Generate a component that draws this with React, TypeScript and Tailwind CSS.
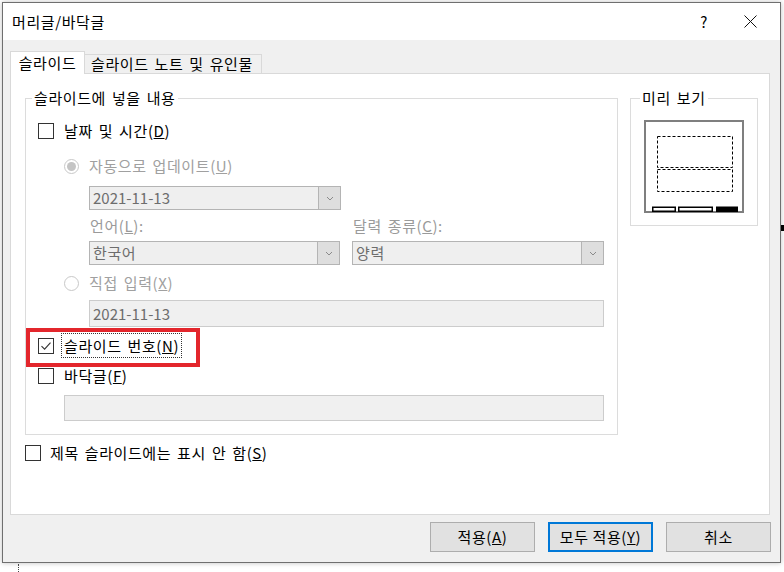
import React from "react";

function Checkbox({ checked }: { checked?: boolean }) {
  return (
    <span className="w-4 h-4 border border-[#333333] bg-white flex items-center justify-center shrink-0">
      {checked && (
        <svg width="14" height="14" viewBox="0 0 14 14">
          <path d="M2.5 7.2 L5.6 10.2 L11.5 3.6" fill="none" stroke="#333333" strokeWidth="1.1" />
        </svg>
      )}
    </span>
  );
}

function Radio({ checked }: { checked?: boolean }) {
  return (
    <span className="w-[15px] h-[15px] rounded-full border border-[#c8c8c8] bg-white flex items-center justify-center shrink-0">
      {checked && <span className="w-[9px] h-[9px] rounded-full bg-[#c4c4c4]" />}
    </span>
  );
}

function Chevron() {
  return (
    <svg width="8" height="5" viewBox="0 0 8 5">
      <path d="M1 1 L4 4 L7 1" fill="none" stroke="#8a8a8a" strokeWidth="1" />
    </svg>
  );
}

function Select({ value, className }: { value: string; className: string }) {
  return (
    <div className={"flex h-[24px] border border-[#b4b4b4] bg-[#efefef] " + className}>
      <div className="flex-1 flex items-center pl-[3px] text-[#6d6d6d]">{value}</div>
      <div className="w-[22px] border-l border-[#b4b4b4] bg-[#dedede] flex items-center justify-center">
        <Chevron />
      </div>
    </div>
  );
}

export default function App() {
  return (
    <div className="relative w-[784px] h-[572px] bg-white overflow-hidden font-['Noto_Sans_CJK_KR','Noto_Sans',sans-serif] text-[15px] leading-[20px] tracking-[0.6px] [word-spacing:2px] text-black">
      <div className="ml-[2px] mt-[2px] w-[779px] h-[561px] border border-[#6f6f6f] bg-[#f0f0f0] flex flex-col shadow-[0_0_5px_rgba(0,0,0,0.25)]">
        {/* title bar */}
        <div className="h-[37px] bg-white flex items-center pl-[9px] pr-[7px] shrink-0">
          <div className="flex-1">머리글/바닥글</div>
          <div className="w-[46px] flex justify-center text-[15px]">?</div>
          <div className="w-[46px] flex justify-center">
            <svg width="13" height="13" viewBox="0 0 13 13">
              <path d="M0.5 0.5 L12.5 12.5 M12.5 0.5 L0.5 12.5" stroke="#111111" strokeWidth="1" />
            </svg>
          </div>
        </div>

        {/* body */}
        <div className="flex-1 flex flex-col pl-[7px] pt-[11px]">
          {/* tabs */}
          <div className="flex items-end h-[22px]">
            <div className="relative z-10 w-[75px] h-[23px] mb-[-1px] bg-white border-t border-l border-r border-[#d9d9d9] flex items-center justify-center">
              슬라이드
            </div>
            <div className="w-[177px] h-[19px] border-t border-r border-[#d9d9d9] flex items-center pl-[6px]">
              슬라이드 노트 및 유인물
            </div>
          </div>

          {/* panel */}
          <div className="w-[760px] h-[442px] bg-white border border-[#d9d9d9] flex flex-col">
            <div className="flex items-start ml-[14px] mt-[14px] gap-[12px]">
              {/* group 1 */}
              <fieldset className="w-[593px] border border-[#dcdcdc] px-0 pb-[13px]">
                <legend className="ml-[6px] px-[2px] leading-[20px]">슬라이드에 넣을 내용</legend>
                <div className="flex flex-col pl-[12px] pr-[12px] mt-[11px]">
                  <div className="flex items-center h-[24px] gap-[10px]">
                    <Checkbox />
                    <span>
                      날짜 및 시간(<u>D</u>)
                    </span>
                  </div>
                  <div className="flex items-center h-[24px] gap-[10px] ml-[26px] mt-[11px] text-[#a0a0a0]">
                    <Radio checked />
                    <span>
                      자동으로 업데이트(<u>U</u>)
                    </span>
                  </div>
                  <Select value="2021-11-13" className="ml-[51px] mt-[8px] w-[252px] h-[23px] tracking-normal" />
                  <div className="flex ml-[51px] mt-[6px] h-[20px] text-[#9a9a9a]">
                    <div className="w-[263px] pl-[1px]">
                      언어(<u>L</u>):
                    </div>
                    <div className="pl-[1px]">
                      달력 종류(<u>C</u>):
                    </div>
                  </div>
                  <div className="flex ml-[51px] mt-[5px] gap-[12px]">
                    <Select value="한국어" className="w-[251px]" />
                    <Select value="양력" className="w-[252px]" />
                  </div>
                  <div className="flex items-center h-[24px] gap-[10px] ml-[26px] mt-[6px] text-[#a0a0a0]">
                    <Radio />
                    <span>
                      직접 입력(<u>X</u>)
                    </span>
                  </div>
                  <div className="ml-[51px] mt-[5px] w-[515px] h-[27px] border border-[#cccccc] bg-[#f0f0f0] flex items-center pl-[3px] text-[#6d6d6d] tracking-normal">
                    2021-11-13
                  </div>
                  <div className="flex items-center h-[25px] gap-[7px] mt-[6px]">
                    <Checkbox checked />
                    <span className="h-[25px] border border-dotted border-[#333333] px-[2px] flex items-center">
                      슬라이드 번호(<u>N</u>)
                    </span>
                  </div>
                  <div className="flex items-center h-[24px] gap-[10px] mt-[6px]">
                    <Checkbox />
                    <span>
                      바닥글(<u>F</u>)
                    </span>
                  </div>
                  <div className="ml-[26px] mt-[7px] w-[540px] h-[26px] border border-[#cccccc] bg-[#f0f0f0]" />
                </div>
              </fieldset>

              {/* group 2 */}
              <fieldset className="w-[128px] border border-[#dcdcdc] px-0">
                <legend className="ml-[9px] px-[2px] leading-[20px]">미리 보기</legend>
                <div className="ml-[13px] mt-[12px] mb-[12px] w-[100px] h-[93px]">
                  <svg width="100" height="93" viewBox="0 0 100 93">
                    <rect x="1" y="1" width="98" height="91" fill="#ffffff" stroke="#7f7f7f" strokeWidth="2" />
                    <rect x="13.5" y="16.5" width="75" height="31" fill="none" stroke="#000000" strokeWidth="1" strokeDasharray="3 2" />
                    <rect x="13.5" y="49.5" width="75" height="22" fill="none" stroke="#000000" strokeWidth="1" strokeDasharray="3 2" />
                    <rect x="8.75" y="87.25" width="22.5" height="4" fill="#ffffff" stroke="#000000" strokeWidth="1.5" />
                    <rect x="34.75" y="87.25" width="33.5" height="4" fill="#ffffff" stroke="#000000" strokeWidth="1.5" />
                    <rect x="72" y="86.5" width="22" height="5.5" fill="#000000" />
                  </svg>
                </div>
              </fieldset>
            </div>

            <div className="flex items-center h-[24px] gap-[9px] ml-[14px] mt-[6px]">
              <Checkbox />
              <span>
                제목 슬라이드에는 표시 안 함(<u>S</u>)
              </span>
            </div>
          </div>

          {/* buttons */}
          <div className="flex justify-end gap-[13px] mt-[7px] pr-[9px]">
            <button className="w-[105px] h-[30px] bg-[#e1e1e1] border border-[#adadad] flex items-center justify-center">
              적용(<u>A</u>)
            </button>
            <button className="w-[105px] h-[30px] bg-[#e1e1e1] border-2 border-[#0078d7] flex items-center justify-center">
              모두 적용(<u>Y</u>)
            </button>
            <button className="w-[105px] h-[30px] bg-[#e1e1e1] border border-[#adadad] flex items-center justify-center">
              취소
            </button>
          </div>
        </div>
      </div>

      {/* annotation and background marks */}
      <div className="absolute left-[26px] top-[328px] w-[174px] h-[39px] border-[4px] border-[#e3262c]" />
      <div className="absolute left-[781px] top-[225px] w-[3px] h-[6px] bg-black" />
      <div className="absolute left-[18px] top-[564px] h-[8px] border-l border-dotted border-[#444444]" />
    </div>
  );
}
